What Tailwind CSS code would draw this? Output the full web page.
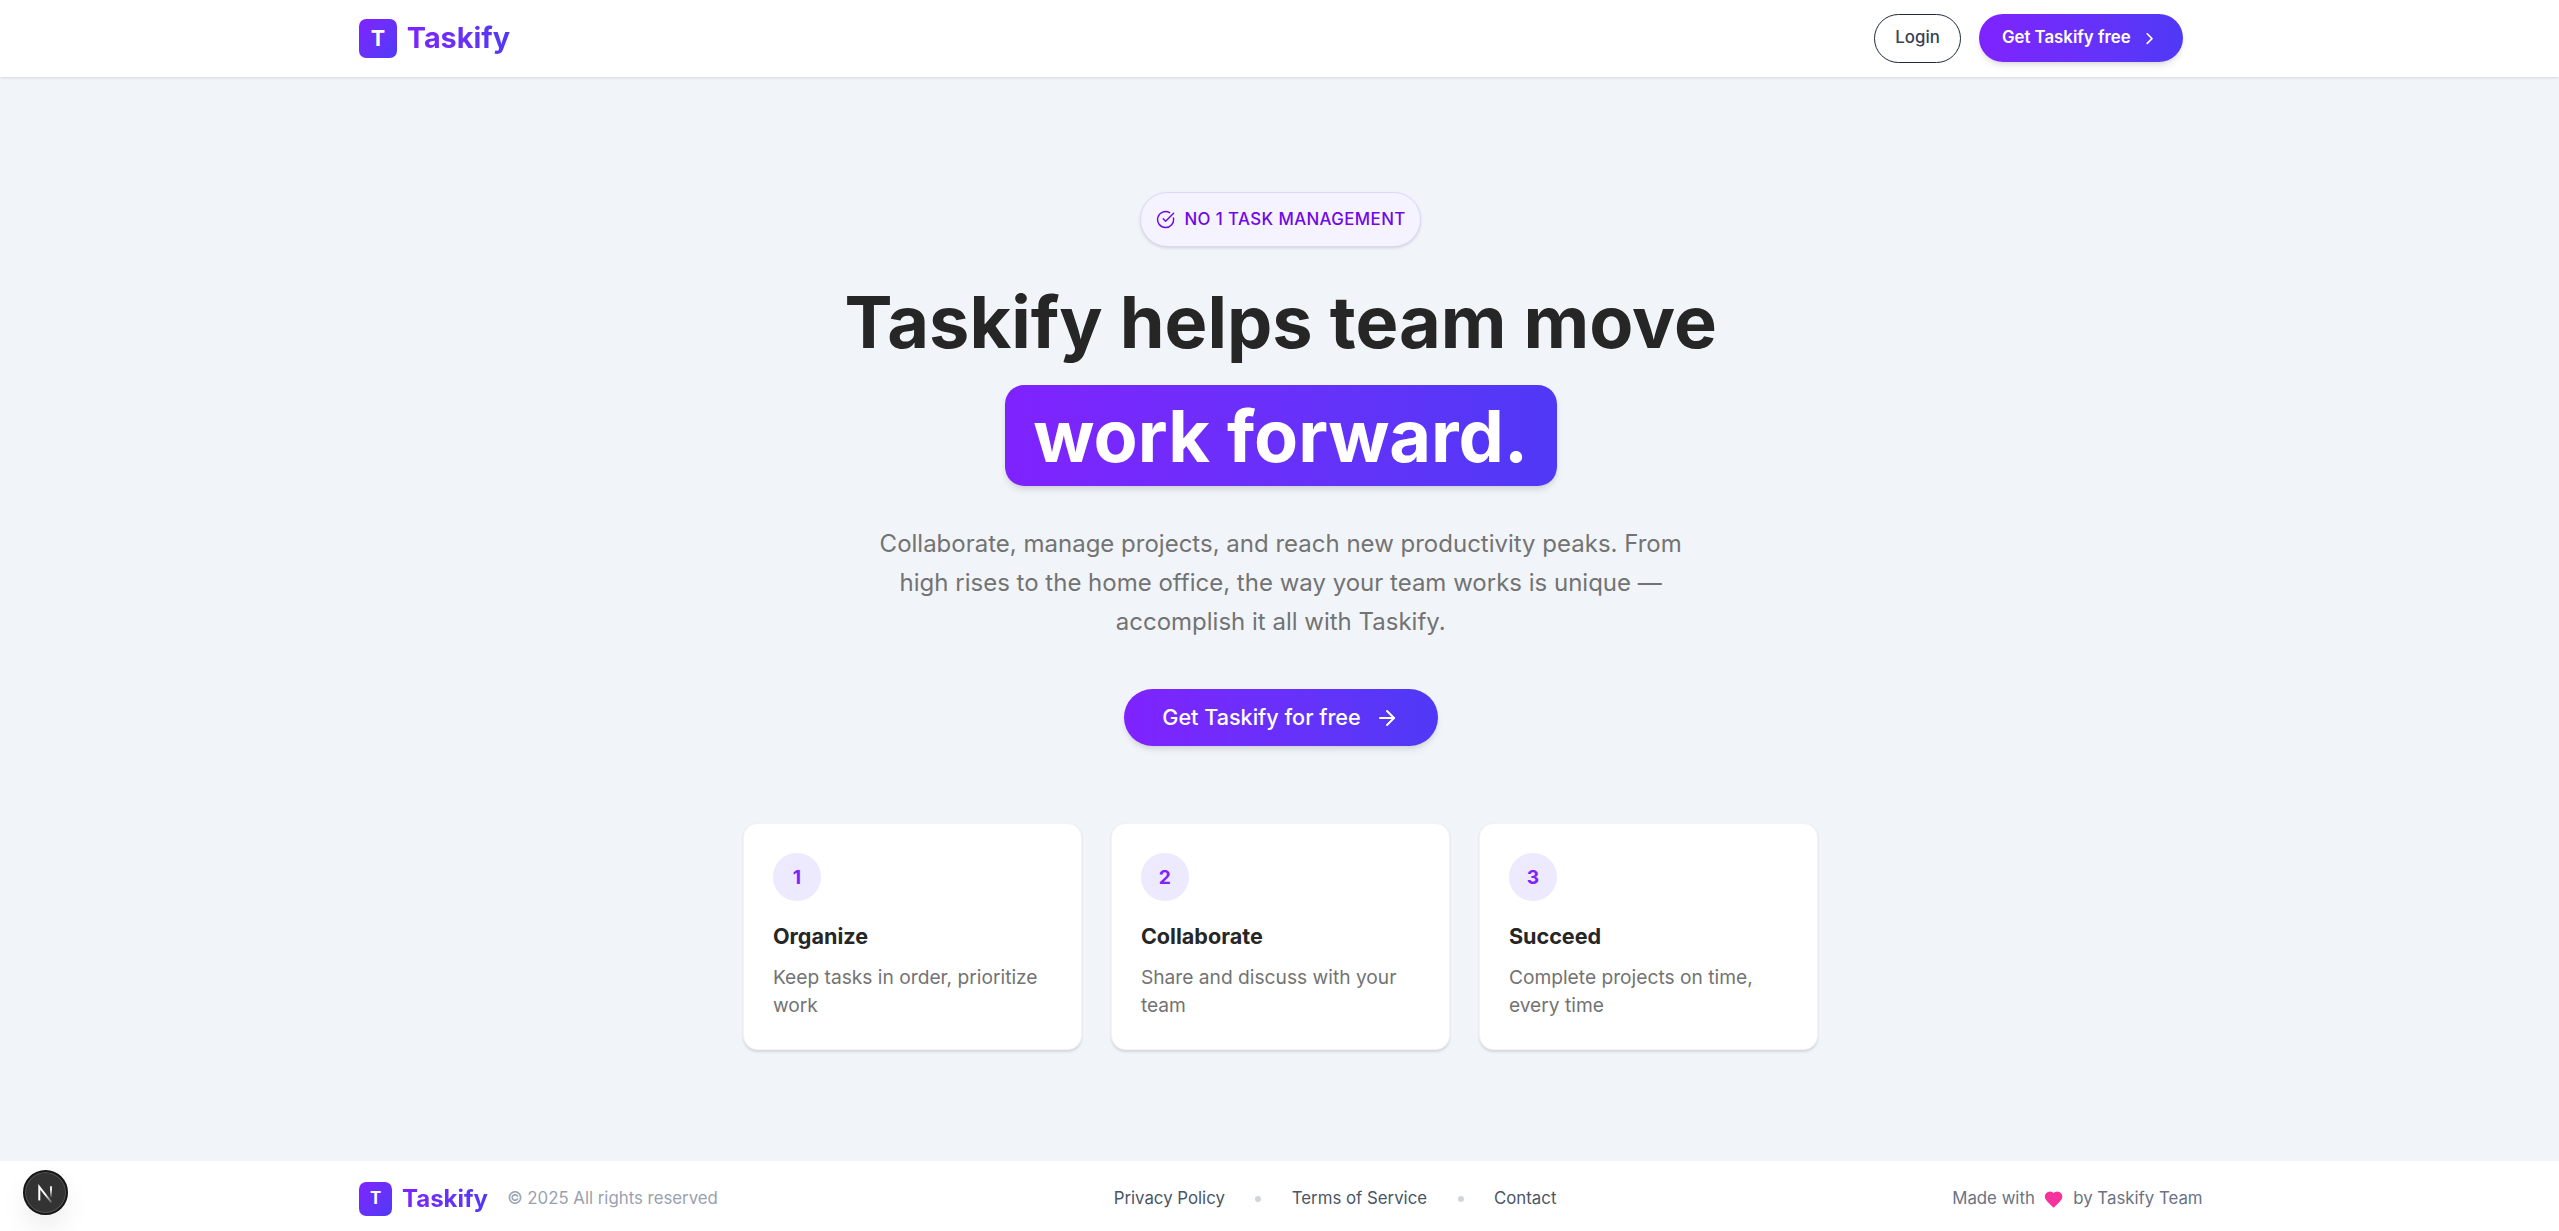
<!DOCTYPE html>
<html lang="en">
<head>
<meta charset="utf-8">
<title>Taskify</title>
<script src="https://cdn.jsdelivr.net/npm/@tailwindcss/browser@4"></script>
</head>
<body class="font-['Inter',sans-serif] antialiased">
<div class="relative flex h-screen flex-col overflow-hidden bg-slate-100">
  <header class="relative flex h-16 shrink-0 items-center justify-between bg-white pr-[313px] pl-[299px] shadow-sm [zoom:1.2]">
    <a class="flex items-center gap-2">
      <span class="flex size-8 items-center justify-center rounded-md bg-linear-to-br from-[#7f22fe] to-[#4f39f6] text-lg font-bold text-white">T</span>
      <span class="bg-linear-to-r from-[#7f22fe] to-[#4f39f6] bg-clip-text text-2xl font-bold text-transparent">Taskify</span>
    </a>
    <div class="flex items-center gap-[15px]">
      <a class="flex h-[41px] items-center rounded-full border border-gray-800 px-[17px] text-sm font-medium text-gray-700">Login</a>
      <a class="flex h-10 items-center gap-2 rounded-full bg-linear-to-r from-[#7f22fe] to-[#4f39f6] pr-5 pl-[19px] text-sm font-semibold text-white shadow-md">Get Taskify free
        <svg class="size-4" viewBox="0 0 24 24" fill="none" stroke="currentColor" stroke-width="2" stroke-linecap="round" stroke-linejoin="round"><path d="m9 18 6-6-6-6"/></svg>
      </a>
    </div>
  </header>

  <main class="flex flex-1 flex-col items-center pt-24 pl-0.5 [zoom:1.2]">
    <div class="flex h-[46px] items-center gap-2 rounded-full border border-violet-200 bg-violet-50 px-3 text-sm font-medium tracking-wide text-violet-700 shadow-sm">
      <svg class="size-4" viewBox="0 0 24 24" fill="none" stroke="currentColor" stroke-width="1.8" stroke-linecap="round" stroke-linejoin="round"><path d="M21.801 10A10 10 0 1 1 17 3.335"/><path d="m9 11 3 3L22 4"/></svg>
      NO 1 TASK MANAGEMENT
    </div>
    <h1 class="mt-8 text-6xl leading-none font-bold text-neutral-800">Taskify helps team move</h1>
    <div class="mt-[23px] rounded-2xl bg-linear-to-r from-[#7f22fe] to-[#4f39f6] px-6 py-3 text-6xl leading-none font-bold text-white shadow-md">work forward.</div>
    <p class="mt-8 w-[672px] text-center text-xl leading-relaxed text-neutral-500">Collaborate, manage projects, and reach new productivity peaks. From<br>high rises to the home office, the way your team works is unique —<br>accomplish it all with Taskify.</p>
    <a class="mt-[39.5px] flex h-12 items-center gap-3 rounded-full bg-linear-to-r from-[#7f22fe] to-[#4f39f6] px-8 text-lg font-medium text-white shadow-md">Get Taskify for free
      <svg class="size-5" viewBox="0 0 24 24" fill="none" stroke="currentColor" stroke-width="2" stroke-linecap="round" stroke-linejoin="round"><path d="M5 12h14"/><path d="m12 5 7 7-7 7"/></svg>
    </a>
    <div class="mt-16 grid w-4xl grid-cols-3 gap-6">
      <section class="rounded-xl border border-gray-100 bg-white p-6 shadow-[0_1px_2px_rgba(0,0,0,0.12)]">
        <div class="mb-4 flex size-10 items-center justify-center rounded-full bg-violet-100 font-bold text-violet-600">1</div>
        <h2 class="text-lg font-bold text-neutral-800">Organize</h2>
        <p class="mt-[7.5px] text-neutral-500">Keep tasks in order, prioritize<br>work</p>
      </section>
      <section class="rounded-xl border border-gray-100 bg-white p-6 shadow-[0_1px_2px_rgba(0,0,0,0.12)]">
        <div class="mb-4 flex size-10 items-center justify-center rounded-full bg-violet-100 font-bold text-violet-600">2</div>
        <h2 class="text-lg font-bold text-neutral-800">Collaborate</h2>
        <p class="mt-[7.5px] text-neutral-500">Share and discuss with your<br>team</p>
      </section>
      <section class="rounded-xl border border-gray-100 bg-white p-6 shadow-[0_1px_2px_rgba(0,0,0,0.12)]">
        <div class="mb-4 flex size-10 items-center justify-center rounded-full bg-violet-100 font-bold text-violet-600">3</div>
        <h2 class="text-lg font-bold text-neutral-800">Succeed</h2>
        <p class="mt-[7.5px] text-neutral-500">Complete projects on time,<br>every time</p>
      </section>
    </div>
  </main>

  <footer class="flex h-[58px] shrink-0 items-center justify-between bg-white pt-[5px] pr-[297px] pl-[299px] text-sm [zoom:1.2]">
    <div class="flex items-center gap-4 text-gray-400">
      <a class="flex items-center gap-2">
        <span class="flex size-7 items-center justify-center rounded-md bg-linear-to-br from-[#7f22fe] to-[#4f39f6] text-sm font-bold text-white">T</span>
        <span class="bg-linear-to-r from-[#7f22fe] to-[#4f39f6] bg-clip-text text-xl font-bold text-transparent">Taskify</span>
      </a>
      <span>© 2025 All rights reserved</span>
    </div>
    <nav class="flex items-center gap-[25.4px] text-gray-600">
      <a>Privacy Policy</a>
      <span class="size-[5px] rounded-full bg-gray-300"></span>
      <a>Terms of Service</a>
      <span class="size-[5px] rounded-full bg-gray-300"></span>
      <a>Contact</a>
    </nav>
    <div class="flex items-center gap-2 text-gray-500">
      <span>Made with</span>
      <svg class="size-4 text-pink-500" viewBox="0 0 24 24" fill="currentColor" stroke="currentColor" stroke-width="2" stroke-linecap="round" stroke-linejoin="round"><path d="M19 14c1.49-1.46 3-3.21 3-5.5A5.5 5.5 0 0 0 16.5 3c-1.76 0-3 .5-4.5 2-1.5-1.5-2.74-2-4.5-2A5.5 5.5 0 0 0 2 8.5c0 2.3 1.5 4.05 3 5.5l7 7Z"/></svg>
      <span>by Taskify Team</span>
    </div>
  </footer>

  <!-- Floating dev tools button -->
  <button class="absolute bottom-4 left-[23px] flex size-[45px] items-center justify-center rounded-full border-2 border-neutral-900 bg-[#333] shadow-[inset_0_0_0_1px_#555,0_14px_30px_-4px_rgba(0,0,0,0.1)]">
    <svg class="size-[45px] shrink-0" viewBox="0 0 45 45" fill="none" stroke-width="2">
      <defs>
        <linearGradient id="stem" gradientUnits="userSpaceOnUse" x1="28" y1="16" x2="28" y2="28"><stop offset="0.3" stop-color="#fff"/><stop offset="1" stop-color="#fff" stop-opacity="0"/></linearGradient>
        <linearGradient id="diagonal" gradientUnits="userSpaceOnUse" x1="22" y1="23" x2="29" y2="32"><stop offset="0.1" stop-color="#fff"/><stop offset="1" stop-color="#fff" stop-opacity="0.2"/></linearGradient>
      </defs>
      <path d="M16.3 30.5V17L28.5 32.5" stroke="url(#diagonal)"/>
      <path d="M28 16.2V28.5" stroke="url(#stem)" stroke-width="1.8"/>
    </svg>
  </button>
</div>
</body>
</html>
